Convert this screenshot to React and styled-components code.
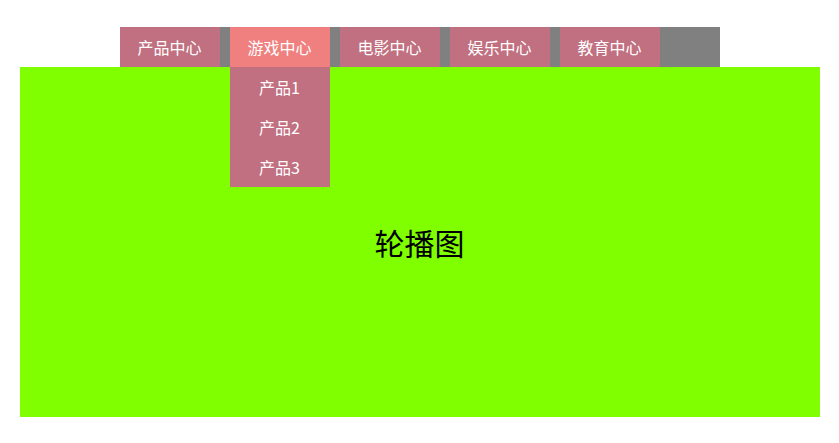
import styled, { createGlobalStyle } from 'styled-components';

const GlobalStyle = createGlobalStyle`
  body {
    margin: 0;
    background: #fff;
    font-family: "Noto Sans CJK SC", "Noto Sans", sans-serif;
  }
`;

const menus = [
  { title: '产品中心' },
  { title: '游戏中心', children: ['产品1', '产品2', '产品3'], open: true },
  { title: '电影中心' },
  { title: '娱乐中心' },
  { title: '教育中心' },
];

const App = () => {
  return (
    <Pagina>
      <GlobalStyle />
      <Navegacion>
        {menus.map((m) => (
          <Item key={m.title} $activo={m.open}>
            {m.title}
            {m.open && m.children && (
              <Submenu>
                {m.children.map((c) => (
                  <SubItem key={c}>{c}</SubItem>
                ))}
              </Submenu>
            )}
          </Item>
        ))}
      </Navegacion>
      <Banner>轮播图</Banner>
    </Pagina>
  );
};

const Pagina = styled.div`
  display: flex;
  flex-direction: column;
  align-items: center;
  padding-top: 27px;
`;

const Navegacion = styled.ul`
  display: flex;
  gap: 10px;
  width: 600px;
  height: 40px;
  margin: 0;
  padding: 0;
  list-style: none;
  background: #808080;
  position: relative;
  z-index: 2;
`;

const Item = styled.li`
  position: relative;
  width: 100px;
  height: 40px;
  line-height: 40px;
  text-align: center;
  font-size: 16px;
  color: #fff;
  background: ${(p) => (p.$activo ? '#f08080' : '#c07080')};
  cursor: pointer;
`;

// desplegable bajo el item activo
const Submenu = styled.ul`
  position: absolute;
  top: 40px;
  left: 0;
  width: 100px;
  margin: 0;
  padding: 0;
  list-style: none;
  background: #c07080;
`;

const SubItem = styled.li`
  height: 40px;
  line-height: 40px;
  font-size: 16px;
  color: #fff;
`;

const Banner = styled.div`
  width: 800px;
  height: 350px;
  display: flex;
  justify-content: center;
  align-items: center;
  background: #7fff00;
  font-size: 30px;
  color: #000;
`;

export default App;
